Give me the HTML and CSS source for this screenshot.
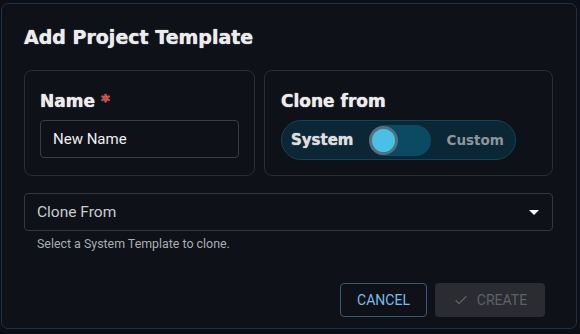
FILE: index.html
```html
<!DOCTYPE html>
<html lang="en">
<head>
    <meta charset="UTF-8">
    <title>Add Project Template</title>
    <link rel="stylesheet" href="styles.css">
</head>
<body>
    <div class="dialog">
        <h2 class="dialog-title">Add Project Template</h2>
        <div class="cards">
            <div class="card card-name">
                <div class="card-label">Name <span class="required">*</span></div>
                <div class="text-input">New Name</div>
            </div>
            <div class="card card-clone">
                <div class="card-label">Clone from</div>
                <div class="toggle">
                    <span class="toggle-on">System</span>
                    <span class="switch"><span class="knob"></span></span>
                    <span class="toggle-off">Custom</span>
                </div>
            </div>
        </div>
        <div class="select">
            <span>Clone From</span>
            <span class="caret"></span>
        </div>
        <div class="helper">Select a System Template to clone.</div>
        <div class="actions">
            <button class="btn btn-cancel">CANCEL</button>
            <button class="btn btn-create">
                <svg width="16" height="16" viewBox="0 0 24 24"><path d="M4 12.5l5 5L20 6.5" fill="none" stroke="#5d6166" stroke-width="2"/></svg>
                CREATE
            </button>
        </div>
    </div>
</body>
</html>
```

FILE: styles.css
```css
body {
    margin: 0;
    background-color: #0c0f15;
    font-family: Roboto, "Liberation Sans", Arial, sans-serif;
    color: #e8e8e8;
}

.dialog {
    margin: 3px 3px 0 1px;
    height: 326px;
    border: 1px solid #1d3049;
    border-radius: 7px;
    background-color: #0e1118;
    padding: 0 23px 0 22px;
    box-sizing: border-box;
}

.dialog-title {
    margin: 0;
    padding-top: 22px;
    font-family: "DejaVu Sans", sans-serif;
    font-size: 19px;
    font-weight: 700;
    color: #ececec;
    text-shadow: 0 0 1px #ececec;
}

.cards {
    display: flex;
    gap: 9px;
    margin-top: 22px;
}

.card {
    border: 1px solid #2a2d34;
    border-radius: 8px;
    height: 106px;
    box-sizing: border-box;
    padding: 20px 15px 0 15px;
}

.card-name {
    width: 231px;
}

.card-clone {
    flex: 1;
    padding-left: 16px;
}

.card-label {
    font-family: "DejaVu Sans", sans-serif;
    font-size: 17px;
    font-weight: 700;
    color: #ececec;
    text-shadow: 0 0 1px #ececec;
    height: 20px;
}

.required {
    color: #e53935;
}

.text-input {
    margin-top: 9px;
    width: 199px;
    height: 38px;
    box-sizing: border-box;
    border: 1px solid #3a3d44;
    border-radius: 4px;
    padding: 0 12px;
    display: flex;
    align-items: center;
    font-size: 15px;
    color: #f0f0f0;
}

.toggle {
    margin-top: 9px;
    width: 235px;
    height: 40px;
    box-sizing: border-box;
    border: 1px solid #124356;
    border-radius: 20px;
    background-color: #0b2735;
    display: flex;
    align-items: center;
    padding-left: 9px;
    font-family: "DejaVu Sans", sans-serif;
    font-weight: 700;
}

.toggle-on {
    font-size: 15px;
    color: #dedede;
    text-shadow: 0 0 1px #dedede;
}

.switch {
    margin-left: 16px;
    width: 62px;
    height: 31px;
    border-radius: 16px;
    background-color: #0b4a63;
    position: relative;
}

.knob {
    position: absolute;
    left: 0;
    top: 1px;
    width: 23px;
    height: 23px;
    border-radius: 50%;
    background-color: #4bc0e6;
    border: 3px solid #53707d;
}

.toggle-off {
    margin-left: 15px;
    font-size: 13.5px;
    color: #8c969c;
}

.select {
    margin-top: 17px;
    height: 38px;
    box-sizing: border-box;
    border: 1px solid #34373e;
    border-radius: 4px;
    display: flex;
    align-items: center;
    justify-content: space-between;
    padding: 0 13px 0 12px;
    font-size: 15.5px;
    color: #c9cbcf;
}

.caret {
    width: 0;
    height: 0;
    border-left: 5px solid transparent;
    border-right: 5px solid transparent;
    border-top: 5px solid #ffffff;
}

.helper {
    margin: 5px 0 0 13px;
    font-size: 12.4px;
    color: #a9adb2;
}

.actions {
    display: flex;
    justify-content: flex-end;
    gap: 8px;
    margin-top: 32px;
    padding-right: 8px;
}

.btn {
    height: 34px;
    border-radius: 4px;
    font-family: Roboto, "Liberation Sans", Arial, sans-serif;
    font-size: 14px;
    display: flex;
    align-items: center;
    justify-content: center;
    gap: 8px;
}

.btn-cancel {
    width: 87px;
    background: transparent;
    border: 1px solid #3b5875;
    color: #7bbbe6;
}

.btn-create {
    width: 110px;
    background-color: #2a2c31;
    border: none;
    color: #5e6268;
}
```
